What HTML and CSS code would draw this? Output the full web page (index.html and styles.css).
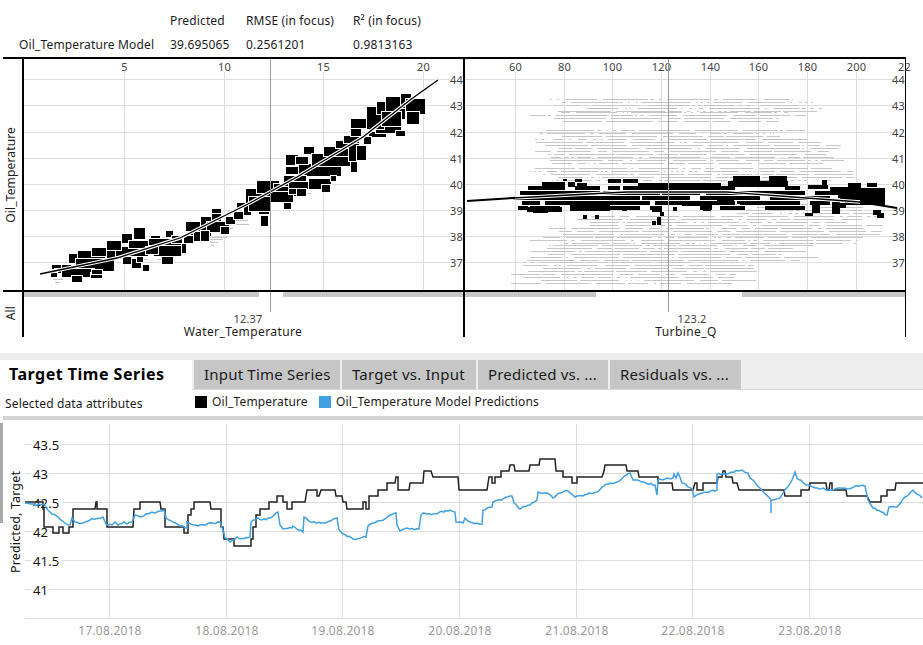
FILE: index.html
```html
<!DOCTYPE html>
<html lang="en">
  <head>
    <meta charset="UTF-8" />
    <title>Model Evaluation</title>
    <link rel="stylesheet" href="styles.css">
  </head>
  <body>
    <div class="stats">
      <span></span><span>Predicted</span><span>RMSE (in focus)</span><span>R² (in focus)</span>
      <span>Oil_Temperature Model</span><span>39.695065</span><span>0.2561201</span><span>0.9813163</span>
    </div>

    <div class="plots">
      <div class="side">
        <div class="side-main"><span class="side-text">Oil_Temperature</span></div>
        <div class="side-foot"><span class="side-text">All</span></div>
      </div>
      <svg id="water-plot" class="panel" width="439" height="278" viewBox="24 59 439 278"></svg>
      <svg id="turbine-plot" class="panel" width="440" height="278" viewBox="465 59 440 278"></svg>
    </div>

    <div class="tabs">
      <div class="tab active">Target Time Series</div>
      <div class="tab tab-input">Input Time Series</div>
      <div class="tab tab-target">Target vs. Input</div>
      <div class="tab tab-pred">Predicted vs. ...</div>
      <div class="tab tab-resid">Residuals vs. ...</div>
    </div>

    <div class="legend">
      <span class="legend-title">Selected data attributes</span>
      <span class="swatch black"></span><span class="legend-name">Oil_Temperature</span>
      <span class="swatch blue"></span><span>Oil_Temperature Model Predictions</span>
    </div>
    <div class="divider"></div>

    <svg id="series-plot" class="series" width="923" height="224" viewBox="0 421 923 224"></svg>

    <script src="plots.js"></script>
  </body>
</html>
```

FILE: styles.css
```css
* {
  box-sizing: border-box;
  margin: 0;
  padding: 0;
}

body {
  font-family: "Noto Sans", "DejaVu Sans", sans-serif;
  font-size: 12px;
  letter-spacing: 0.15px;
  color: #1c1c1c;
  background-color: #ffffff;
  width: 923px;
  height: 645px;
  overflow: hidden;
}

.stats {
  display: grid;
  grid-template-columns: 151px 76px 107px 1fr;
  grid-auto-rows: 24px;
  align-items: center;
  height: 57px;
  padding: 8px 0 0 19px;
}

.plots {
  display: flex;
  width: 903px;
  height: 280px;
  margin-left: 3px;
  border-top: 2px solid #000000;
  border-right: 1px solid #000000;
}

.side {
  width: 19px;
  display: flex;
  flex-direction: column;
}

.side-main {
  height: 233px;
  padding-right: 5px;
  border-bottom: 2px solid #000000;
  display: flex;
  justify-content: center;
  align-items: center;
}

.side-foot {
  height: 36px;
  padding: 7px 5px 0 0;
  display: flex;
  justify-content: center;
  align-items: center;
}

.side-text {
  writing-mode: vertical-rl;
  transform: rotate(180deg);
}

.panel {
  display: block;
  flex: none;
  overflow: visible;
  border-left: 2px solid #000000;
  box-sizing: content-box;
}

.panel text,
.series text {
  font-family: "Noto Sans", "DejaVu Sans", sans-serif;
}

.tick,
.tick-start,
.tick-end {
  font-size: 11px;
  fill: #444444;
}

.tick {
  text-anchor: middle;
}

.tick-end {
  text-anchor: end;
}

.axis-name {
  font-size: 12px;
  letter-spacing: 0.4px;
  fill: #1c1c1c;
  text-anchor: middle;
}

.tabs {
  display: flex;
  gap: 2px;
  height: 37px;
  margin-top: 16px;
  padding-top: 7px;
  background-color: #eeeeee;
  border-bottom: 1px solid #d8d8d8;
}

.tab {
  height: 29px;
  line-height: 29px;
  font-size: 15px;
  letter-spacing: 0.2px;
  background-color: #c6c6c6;
  padding-left: 10px;
}

.tab.active {
  width: 192px;
  height: 30px;
  padding-left: 9px;
  font-size: 16px;
  letter-spacing: 0.5px;
  font-weight: 700;
  background-color: #ffffff;
  color: #000000;
}

.tab-input { width: 146px; }
.tab-target { width: 134px; }
.tab-pred { width: 130px; }
.tab-resid { width: 131px; }

.legend {
  display: flex;
  align-items: center;
  height: 26px;
  padding-left: 5px;
}

.legend-title {
  width: 190px;
}

.swatch {
  width: 12px;
  height: 12px;
  margin-right: 5px;
  margin-bottom: 3px;
}

.swatch.black { background-color: #000000; }
.swatch.blue { background-color: #41a0e4; }

.legend-name {
  width: 107px;
  margin-bottom: 3px;
}

.legend span:last-child {
  margin-bottom: 3px;
}

.divider {
  height: 4px;
  margin-left: 3px;
  margin-bottom: 1px;
  background-color: #d4d4d4;
}

.series {
  display: block;
}

.value {
  font-size: 13px;
  fill: #111111;
}

.date {
  font-size: 12px;
  letter-spacing: 0.2px;
  fill: #9a9a9a;
  text-anchor: middle;
}

.series-name {
  font-size: 12.5px;
  fill: #111111;
  text-anchor: middle;
}
```

FILE: plots.js
```js
const NS = "http://www.w3.org/2000/svg";

function add(svg, tag, attrs, text) {
  const el = document.createElementNS(NS, tag);
  for (const key in attrs) el.setAttribute(key, attrs[key]);
  if (text !== undefined) el.textContent = text;
  svg.appendChild(el);
  return el;
}

function line(svg, x1, y1, x2, y2, color, width) {
  add(svg, "line", {
    x1, y1, x2, y2,
    stroke: color,
    "stroke-width": width || 1,
    "shape-rendering": "crispEdges",
  });
}

function blocks(svg, list, color) {
  let d = "";
  list.forEach(([x, y, w, h]) => {
    d += `M${x} ${y}h${w}v${h}h${-w}z`;
  });
  add(svg, "path", { d, fill: color, "shape-rendering": "crispEdges" });
}

// black marks with a white edge, the edge shows where marks overlap
function outlined(svg, list) {
  list.forEach(([x, y, w, h]) => {
    add(svg, "rect", {
      x: x - 1.5, y: y - 1.5, width: w + 3, height: h + 3,
      fill: "#000000", stroke: "#ffffff", "stroke-width": 1,
      "shape-rendering": "crispEdges",
    });
  });
}

// simple seeded random so the picture is the same every time
let seed = 7;
function rnd() {
  seed = (seed * 16807) % 2147483647;
  return seed / 2147483647;
}

const levels = [
  [44, 79.5], [43, 105.5], [42, 132.5], [41, 158.5],
  [40, 184.5], [39, 210.5], [38, 236.5], [37, 262.5],
];

function trend(svg, points) {
  const p = points.map((q) => q.join(",")).join(" ");
  add(svg, "polyline", { points: p, fill: "none", stroke: "#ffffff", "stroke-width": 3.6 });
  add(svg, "polyline", { points: p, fill: "none", stroke: "#000000", "stroke-width": 1.3 });
}

/* ---------- Water_Temperature ---------- */
const water = document.getElementById("water-plot");

[[5, 124.5], [10, 224.5], [15, 323.5], [20, 423.5]].forEach(([n, x]) => {
  line(water, x, 72, x, 290, "#dddddd");
  add(water, "text", { x, y: 71, class: "tick" }, n);
});
levels.forEach(([n, y]) => {
  line(water, 24, y, 450, y, "#dddddd");
  add(water, "text", { x: 463, y: y + 4, class: "tick-end" }, n);
});

blocks(water, [
  [230, 220, 18, 1], [232, 224, 17, 1], [228, 228, 5, 1], [210, 237, 17, 1],
  [210, 239, 13, 1], [210, 242, 8, 1], [211, 245, 3, 1], [53, 279, 10, 1],
  [55, 282, 5, 1], [143, 259, 5, 1], [157, 259, 5, 1], [333, 169, 6, 1],
  [335, 172, 4, 1], [304, 193, 7, 1], [390, 133, 7, 1], [417, 119, 3, 1],
], "#c4c4c4");

outlined(water, [
  [53, 266, 8, 2], [63, 266, 7, 2], [56, 270, 12, 2], [52, 274, 4, 2],
  [70, 255, 6, 7], [79, 252, 25, 6], [93, 249, 15, 6], [108, 250, 12, 8],
  [77, 260, 36, 10], [63, 270, 30, 6], [73, 277, 8, 4], [92, 274, 9, 3], [93, 271, 8, 2],
  [117, 248, 30, 7], [108, 242, 12, 7], [123, 235, 8, 7], [135, 229, 9, 9],
  [130, 242, 17, 5], [124, 258, 6, 5], [133, 260, 7, 7], [138, 258, 4, 3], [144, 266, 4, 4],
  [160, 240, 25, 12], [152, 237, 7, 3], [150, 240, 30, 4], [155, 247, 25, 8], [147, 248, 10, 5],
  [167, 232, 5, 4], [163, 258, 9, 5], [173, 237, 8, 5],
  [190, 225, 20, 10], [187, 223, 18, 7], [202, 218, 10, 7], [213, 210, 7, 4], [213, 215, 7, 5],
  [185, 237, 7, 5], [195, 233, 8, 7], [208, 223, 20, 8], [222, 228, 6, 5],
  [202, 232, 6, 8], [227, 218, 7, 5], [235, 213, 7, 5], [238, 204, 10, 3],
  [245, 207, 5, 7], [247, 190, 23, 13], [258, 182, 20, 10], [260, 203, 8, 10],
  [262, 217, 5, 8], [250, 198, 20, 12], [275, 185, 30, 10], [272, 193, 20, 8], [285, 204, 5, 4],
  [290, 165, 50, 10], [287, 156, 10, 8], [305, 148, 8, 5], [297, 158, 10, 5], [287, 168, 10, 5],
  [285, 177, 20, 8], [290, 183, 20, 5], [290, 190, 10, 3], [298, 190, 7, 5],
  [310, 180, 20, 8], [323, 186, 6, 5], [332, 177, 3, 3],
  [313, 155, 37, 10], [325, 148, 23, 7], [337, 142, 15, 5], [345, 137, 13, 5],
  [350, 145, 8, 15], [358, 147, 7, 12], [352, 163, 4, 8], [352, 128, 8, 7], [352, 120, 15, 7],
  [370, 133, 15, 3], [365, 138, 5, 5], [377, 128, 23, 4], [397, 132, 7, 3],
  [368, 108, 15, 20], [378, 103, 8, 10], [387, 98, 17, 20], [402, 95, 8, 12],
  [383, 113, 17, 12], [407, 100, 17, 13], [408, 113, 10, 10],
]);

trend(water, [
  [40, 274], [117, 258], [180, 238], [220, 218], [250, 203],
  [297, 177], [363, 137], [410, 100], [438, 80],
]);

line(water, 270.5, 59, 270.5, 312, "#9a9a9a");
add(water, "rect", { x: 24, y: 290, width: 439, height: 2, fill: "#000000" });
add(water, "rect", { x: 24, y: 292, width: 235, height: 5, fill: "#c8c8c8" });
add(water, "rect", { x: 283, y: 292, width: 180, height: 5, fill: "#c8c8c8" });
add(water, "text", { x: 248, y: 323, class: "tick" }, "12.37");
add(water, "text", { x: 243, y: 336, class: "axis-name" }, "Water_Temperature");

/* ---------- Turbine_Q ---------- */
const turbine = document.getElementById("turbine-plot");

[[60, 515.5], [80, 564.5], [100, 612.5], [120, 661.5], [140, 710.5],
 [160, 758.5], [180, 807.5], [200, 856.5]].forEach(([n, x]) => {
  line(turbine, x, 72, x, 290, "#dddddd");
  add(turbine, "text", { x, y: 71, class: "tick" }, n);
});
add(turbine, "text", { x: 898, y: 71, class: "tick-start" }, "22");
levels.forEach(([n, y]) => {
  line(turbine, 465, y, 893, y, "#dddddd");
  add(turbine, "text", { x: 905, y: y + 4, class: "tick-end" }, n);
});

// faint rows of all other points: [top, bottom, left, right, how many dots]
const bands = [
  [99, 112, 550, 830, 0.6], [112, 124, 525, 815, 0.3], [130, 142, 530, 810, 0.5],
  [142, 165, 525, 850, 0.25], [168, 181, 525, 870, 0.5], [204, 216, 720, 890, 0.5],
  [216, 228, 570, 885, 0.35], [228, 245, 525, 888, 0.25], [245, 262, 520, 820, 0.25],
  [262, 284, 510, 760, 0.35],
];
const faint = [];
bands.forEach(([top, bottom, left, right, dots]) => {
  for (let y = top; y < bottom; y += 3) {
    let x = left + rnd() * 40;
    const end = right - rnd() * 40;
    while (x < end) {
      const w = Math.min(rnd() < dots ? 1 + rnd() * 3 : 8 + rnd() * 45, end - x);
      faint.push([Math.round(x), y, Math.round(w), 1]);
      x += w + 2 + rnd() * 5;
    }
  }
});
blocks(turbine, faint, "#c6c6c6");

const rows = [
  [186, 4, [528, 565, 575, 600, 608, 620, 623, 640, 640, 735, 785, 800]],
  [191, 4, [520, 600, 603, 660, 662, 700, 706, 805, 815, 860]],
  [196, 4, [513, 640, 642, 690, 700, 760, 770, 830, 840, 885]],
  [201, 4, [522, 540, 545, 650, 655, 700, 712, 735, 740, 800, 810, 830, 845, 885]],
  [206, 4, [518, 528, 530, 560, 570, 640, 650, 662, 700, 712, 720, 745, 765, 805]],
];
const marks = [];
rows.forEach(([y, h, spans]) => {
  for (let i = 0; i < spans.length; i += 2) marks.push([spans[i], y, spans[i + 1] - spans[i], h]);
});
blocks(turbine, marks.concat([
  [542, 182, 23, 5], [563, 179, 4, 2], [575, 179, 7, 3], [568, 182, 7, 5], [577, 183, 10, 5],
  [608, 179, 13, 4], [623, 179, 15, 4], [638, 183, 83, 4], [733, 176, 27, 7], [769, 176, 18, 5],
  [728, 181, 60, 6], [808, 185, 20, 4], [822, 180, 5, 5], [830, 187, 20, 7], [848, 183, 13, 5],
  [867, 183, 10, 4], [838, 188, 47, 10], [860, 190, 25, 13], [873, 210, 8, 5], [877, 213, 7, 5],
  [805, 213, 8, 3], [812, 203, 8, 10], [832, 202, 8, 12], [838, 203, 8, 5],
  [527, 207, 35, 5], [533, 210, 15, 3], [570, 203, 40, 8], [578, 208, 20, 3],
  [583, 215, 4, 4], [595, 215, 4, 4], [652, 221, 4, 4], [657, 217, 4, 8], [660, 212, 4, 4],
  [673, 207, 4, 4], [703, 207, 8, 4], [682, 201, 30, 5], [717, 200, 17, 5], [737, 201, 18, 3],
  [652, 207, 10, 5], [622, 207, 5, 4],
]), "#000000");

trend(turbine, [[513, 198], [627, 192], [727, 192], [793, 197], [860, 202]]);
add(turbine, "polyline", {
  points: "467,201 513,198 515,198",
  fill: "none", stroke: "#000000", "stroke-width": 2,
});
add(turbine, "polyline", {
  points: "860,202 897,208",
  fill: "none", stroke: "#000000", "stroke-width": 2,
});

line(turbine, 668.5, 59, 668.5, 312, "#9a9a9a");
add(turbine, "rect", { x: 465, y: 290, width: 440, height: 2, fill: "#000000" });
add(turbine, "rect", { x: 465, y: 292, width: 131, height: 5, fill: "#c8c8c8" });
add(turbine, "rect", { x: 742, y: 292, width: 163, height: 5, fill: "#c8c8c8" });
add(turbine, "text", { x: 692, y: 323, class: "tick" }, "123.2");
add(turbine, "text", { x: 686, y: 336, class: "axis-name" }, "Turbine_Q");

/* ---------- Target time series ---------- */
const series = document.getElementById("series-plot");

add(series, "rect", { x: 0, y: 423, width: 3, height: 100, fill: "#aaaaaa" });
[444.5, 473.5, 502.5, 531.5, 560.5, 589.5, 618.5].forEach((y) => {
  line(series, 25, y, 923, y, "#dddddd");
});
[109.5, 226.5, 342.5, 459.5, 576.5, 692.5, 809.5].forEach((x, i) => {
  line(series, x, 424, x, 618, "#dddddd");
  add(series, "text", { x: x + 0.5, y: 635, class: "date" }, `${17 + i}.08.2018`);
});

[["43.5", 444.5, 31], ["43", 473.5, 18], ["42.5", 502.5, 31], ["42", 531.5, 18],
 ["41.5", 560.5, 31], ["41", 589.5, 18]].forEach(([label, y, w]) => {
  add(series, "rect", { x: 31, y: y - 7, width: w, height: 14, fill: "#ffffff" });
  add(series, "text", { x: 33, y: y + 5, class: "value" }, label);
});

add(series, "text", {
  x: 0, y: 0,
  class: "series-name",
  transform: "translate(20 522) rotate(-90)",
}, "Predicted, Target");

// x, y corners of the stepped target line
const target = [
  25, 502, 43, 502, 43, 509, 44, 509, 44, 527, 53, 527, 53, 533, 59, 533, 59, 527, 63, 527,
  63, 533, 69, 533, 69, 527, 73, 527, 73, 509, 95, 509, 96, 502, 97, 502, 97, 509, 107, 509,
  107, 527, 133, 527, 134, 509, 140, 509, 140, 502, 160, 502, 161, 509, 165, 509, 165, 527,
  184, 527, 184, 533, 188, 533, 188, 515, 191, 515, 191, 509, 194, 509, 194, 502, 210, 502,
  211, 509, 221, 509, 221, 527, 223, 527, 224, 539, 234, 539, 234, 546, 251, 546, 251, 539,
  253, 539, 253, 527, 256, 527, 256, 515, 260, 515, 260, 509, 269, 509, 269, 502, 277, 502,
  277, 496, 283, 496, 283, 502, 287, 502, 287, 509, 292, 509, 292, 502, 305, 502, 307, 490,
  317, 490, 317, 496, 319, 496, 321, 490, 335, 490, 336, 496, 342, 496, 343, 502, 346, 502,
  347, 509, 363, 509, 363, 502, 366, 502, 366, 509, 369, 509, 369, 496, 378, 496, 378, 490,
  387, 490, 387, 483, 395, 483, 396, 477, 398, 477, 398, 490, 409, 490, 410, 483, 423, 483,
  424, 471, 431, 471, 433, 477, 458, 477, 459, 490, 487, 490, 489, 477, 492, 477, 492, 483,
  495, 483, 495, 477, 501, 477, 501, 471, 509, 471, 510, 465, 514, 465, 515, 471, 529, 471,
  530, 465, 539, 465, 540, 459, 555, 459, 556, 471, 563, 471, 563, 477, 572, 477, 572, 483,
  577, 483, 577, 477, 602, 477, 604, 471, 605, 465, 626, 465, 627, 471, 638, 471, 639, 477,
  658, 477, 658, 483, 672, 483, 673, 490, 693, 490, 695, 483, 697, 483, 697, 490, 703, 490,
  703, 483, 717, 483, 718, 477, 722, 477, 723, 471, 725, 471, 726, 477, 732, 477, 733, 483,
  737, 483, 739, 490, 784, 490, 785, 496, 801, 496, 801, 490, 809, 490, 810, 483, 826, 483,
  827, 490, 829, 490, 830, 483, 832, 483, 832, 490, 846, 490, 847, 496, 867, 496, 870, 502,
  881, 502, 881, 496, 887, 496, 887, 490, 895, 490, 896, 483, 923, 483,
];
const targetPoints = [];
for (let i = 0; i < target.length; i += 2) targetPoints.push(`${target[i]},${target[i + 1]}`);

const predicted = [
  25, 503, 37, 505, 43, 504, 50, 512, 58, 517, 65, 523, 70, 525, 72, 518, 75, 522, 83, 523,
  90, 520, 103, 517, 106, 524, 112, 525, 115, 522, 118, 525, 124, 522, 127, 524, 132, 522,
  135, 515, 140, 517, 150, 513, 160, 511, 164, 510, 166, 518, 177, 524, 187, 528, 187, 522,
  195, 525, 198, 526, 207, 524, 220, 522, 223, 530, 225, 538, 230, 542, 237, 537, 240, 539,
  250, 537, 251, 522, 258, 518, 262, 520, 270, 518, 278, 512, 280, 525, 283, 529, 292, 528,
  293, 526, 297, 529, 303, 532, 304, 517, 310, 522, 323, 523, 337, 518, 339, 530, 343, 534,
  353, 539, 366, 537, 368, 526, 373, 523, 385, 519, 390, 515, 396, 513, 397, 525, 400, 531,
  407, 528, 410, 529, 419, 529, 421, 515, 423, 513, 433, 514, 450, 510, 455, 512, 456, 522,
  463, 523, 465, 518, 470, 522, 482, 524, 483, 510, 492, 507, 493, 502, 512, 496, 514, 503,
  520, 509, 530, 505, 537, 500, 538, 492, 547, 493, 553, 498, 560, 493, 568, 491, 575, 497,
  597, 492, 602, 487, 610, 483, 617, 482, 630, 473, 633, 480, 643, 482, 655, 485, 657, 495,
  658, 480, 673, 478, 674, 474, 676, 478, 678, 473, 682, 483, 692, 489, 694, 497, 702, 493,
  717, 490, 717, 474, 725, 474, 742, 470, 748, 473, 750, 478, 760, 488, 771, 500, 771, 513,
  771, 500, 780, 498, 785, 490, 792, 480, 795, 472, 797, 478, 807, 485, 813, 487, 830, 490,
  840, 488, 847, 489, 855, 486, 865, 486, 868, 500, 873, 508, 887, 515, 889, 507, 897, 507,
  903, 499, 913, 490, 922, 498,
];
// the model line is a little noisy between the traced points
const predictedPoints = [];
for (let i = 0; i < predicted.length - 2; i += 2) {
  const [x1, y1, x2, y2] = predicted.slice(i, i + 4);
  predictedPoints.push(`${x1},${y1}`);
  const steps = Math.floor((x2 - x1) / 2);
  for (let s = 1; s < steps; s++) {
    const t = s / steps;
    predictedPoints.push(`${x1 + (x2 - x1) * t},${y1 + (y2 - y1) * t + (rnd() - 0.5) * 1.8}`);
  }
}
predictedPoints.push("922,498");

add(series, "polyline", {
  points: targetPoints.join(" "),
  fill: "none", stroke: "#222222", "stroke-width": 1.5,
});
add(series, "polyline", {
  points: predictedPoints.join(" "),
  fill: "none", stroke: "#41a0e4", "stroke-width": 1.5,
});
```
